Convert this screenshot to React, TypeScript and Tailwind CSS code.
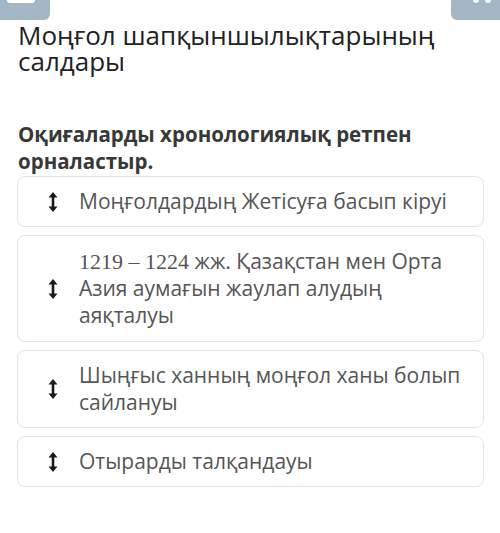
import React from "react";

function DragHandle() {
  return (
    <svg width="10" height="20" viewBox="0 0 10 20" className="shrink-0" aria-hidden="true">
      <path d="M5 0 L9.5 5.5 L6.3 5.5 L6.3 14.5 L9.5 14.5 L5 20 L0.5 14.5 L3.7 14.5 L3.7 5.5 L0.5 5.5 Z" fill="#1a1a1a" />
    </svg>
  );
}

type Item = { key: string; content: React.ReactNode; pad?: string };

const items: Item[] = [
  { key: "a", content: "Моңғолдардың Жетісуға басып кіруі" },
  {
    key: "b",
    pad: "py-[12px]",
    content: (
      <>
        <span style={{ fontFamily: '"Liberation Serif", "DejaVu Serif", serif' }} className="text-[22px]">
          1219 – 1224
        </span>{" "}
        жж. Қазақстан мен Орта Азия аумағын жаулап алудың аяқталуы
      </>
    ),
  },
  { key: "c", content: "Шыңғыс ханның моңғол ханы болып сайлануы" },
  { key: "d", content: "Отырарды талқандауы" },
];

export default function App() {
  return (
    <div
      className="w-[500px] h-[533px] bg-white overflow-hidden"
      style={{ fontFamily: '"Open Sans", "Noto Sans", sans-serif' }}
    >
      <div className="flex justify-between h-5">
        <div className="w-[50px] h-5 bg-[#a5b7c5] rounded-br-[6px] relative">
          <div className="absolute left-[7px] top-0 w-[28px] h-[3px] bg-white rounded-b-sm" />
        </div>
        <div className="w-[49px] h-5 bg-[#a5b7c5] rounded-bl-[6px] relative">
          <div className="absolute left-[22px] top-0 w-[6px] h-[3px] bg-white/90 rounded-b-sm" />
          <div className="absolute left-[34px] top-0 w-[6px] h-[3px] bg-white/90 rounded-b-sm" />
        </div>
      </div>

      <div className="px-[17px]">
        <h1 className="pt-[2px] pl-px text-[26px] leading-[26px] font-normal text-[#222222]">
          Моңғол шапқыншылықтарының салдары
        </h1>

        <p className="mt-[47px] pl-px text-[20.5px] leading-[27px] font-bold text-[#383838] pr-[50px]">
          Оқиғаларды хронологиялық ретпен орналастыр.
        </p>

        <div className="mt-px flex flex-col gap-[8px]">
          {items.map((it) => (
            <div
              key={it.key}
              className={`flex items-center w-[467px] rounded-[8px] border border-[#e4e4e4] bg-white pl-[30px] ${it.pad ?? "py-[11px]"}`}
            >
              <DragHandle />
              <div className="ml-[21px] max-w-[388px] text-[21px] leading-[27px] text-[#555555]">{it.content}</div>
            </div>
          ))}
        </div>
      </div>
    </div>
  );
}
